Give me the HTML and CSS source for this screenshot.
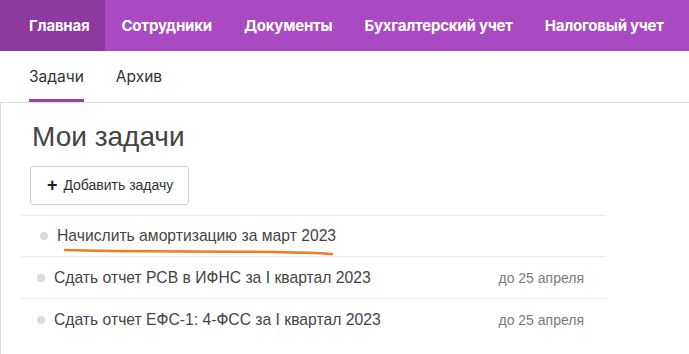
FILE: index.html
```html
<!DOCTYPE html>
<html lang="ru">
<head>
    <meta charset="UTF-8">
    <meta name="viewport" content="width=device-width, initial-scale=1.0">
    <title>Мои задачи</title>
    <link rel="stylesheet" href="styles.css">
</head>
<body>
    <nav class="topnav">
        <a class="active" href="#">Главная</a>
        <a href="#">Сотрудники</a>
        <a href="#">Документы</a>
        <a href="#">Бухгалтерский учет</a>
        <a href="#">Налоговый учет</a>
    </nav>
    <div class="subnav">
        <a class="active" href="#">Задачи</a>
        <a href="#">Архив</a>
    </div>
    <main class="content">
        <h1>Мои задачи</h1>
        <button class="add-task"><span class="plus">+</span> Добавить задачу</button>
        <ul class="task-list">
            <li class="task hovered">
                <span class="dot"></span>
                <span class="task-text">Начислить амортизацию за март 2023</span>
                <svg class="scribble" width="272" height="10" viewBox="0 0 272 10">
                    <path d="M2 3 C 60 5, 150 4, 210 5 S 262 7, 269 7" fill="none" stroke="#f47a22" stroke-width="2.6" stroke-linecap="round"/>
                </svg>
            </li>
            <li class="task">
                <span class="dot"></span>
                <span class="task-text">Сдать отчет РСВ в ИФНС за I квартал 2023</span>
                <span class="due">до 25 апреля</span>
            </li>
            <li class="task">
                <span class="dot"></span>
                <span class="task-text">Сдать отчет ЕФС-1: 4-ФСС за I квартал 2023</span>
                <span class="due">до 25 апреля</span>
            </li>
        </ul>
    </main>
</body>
</html>
```

FILE: styles.css
```css
* {
    margin: 0;
    padding: 0;
    box-sizing: border-box;
}

body {
    font-family: 'Liberation Sans', Arial, sans-serif;
    background: white;
    color: #333;
    overflow: hidden;
}

a {
    text-decoration: none;
}

/* Top navigation */
.topnav {
    display: flex;
    height: 51px;
    background: #a94ac2;
    font-family: Inter, 'Noto Sans', sans-serif;
    white-space: nowrap;
}

.topnav a {
    display: flex;
    align-items: center;
    padding: 0 16px;
    color: white;
    font-size: 15px;
    font-weight: 700;
    letter-spacing: -0.2px;
}

.topnav a:first-child {
    padding-left: 29px;
    padding-right: 16px;
}

.topnav a.active {
    background: #8d39a0;
}

/* Second level tabs */
.subnav {
    display: flex;
    gap: 32px;
    height: 52px;
    padding-left: 29px;
    border-bottom: 1px solid #e0e0e0;
    font-family: Inter, 'Noto Sans', sans-serif;
}

.subnav a {
    display: flex;
    align-items: center;
    padding-top: 2px;
    color: #333;
    font-size: 15.5px;
    border-bottom: 3px solid transparent;
}

.subnav a.active {
    border-bottom-color: #9a40b0;
}

/* Page content */
.content {
    border-left: 1px solid #dcdcdc;
    padding: 17px 0 0 20px;
    height: calc(100vh - 103px);
}

h1 {
    font-size: 28px;
    font-weight: 400;
    color: #444;
    line-height: 34px;
    margin: 0 0 12px 11px;
}

.add-task {
    margin-left: 9px;
    height: 39px;
    padding: 0 15px 0 16px;
    background: white;
    border: 1px solid #cfcfcf;
    border-radius: 3px;
    font-family: 'Liberation Sans', Arial, sans-serif;
    font-size: 14px;
    color: #333;
}

.add-task .plus {
    font-size: 18px;
    font-weight: 700;
    color: #2b1a1a;
    margin-right: 2px;
    vertical-align: -1px;
}

.task-list {
    list-style: none;
    width: 585px;
    margin-top: 10px;
}

.task {
    position: relative;
    display: flex;
    align-items: center;
    gap: 9px;
    height: 42px;
    padding: 0 22px 0 16px;
    border-top: 1px solid #ececec;
    font-size: 15.7px;
}

.task.hovered {
    padding-left: 19px;
    height: 41px;
}

.dot {
    width: 8px;
    height: 8px;
    border-radius: 50%;
    background: #dadada;
    flex-shrink: 0;
}

.task-text {
    flex: 1;
    color: #444;
}

.due {
    font-size: 14px;
    color: #7a7a7a;
}

/* hand drawn mark under the first task */
.scribble {
    position: absolute;
    left: 42px;
    top: 31px;
}
```
